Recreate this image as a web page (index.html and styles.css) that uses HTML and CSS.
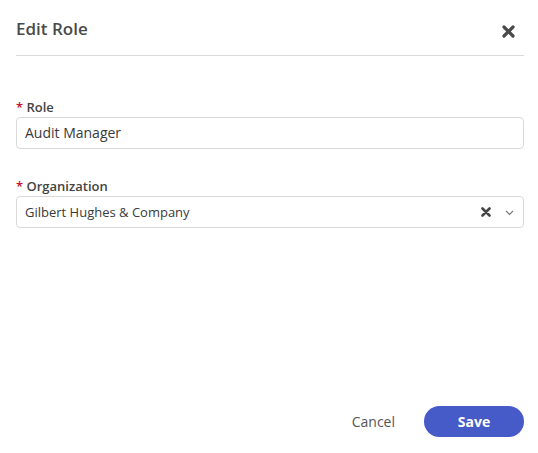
FILE: index.html
```html
<!DOCTYPE html>
<html>
<head>
<meta charset="utf-8">
<link rel="stylesheet" href="styles.css">
</head>
<body>
<div class="dialog">
  <div class="header">
    <h1 class="title">Edit Role</h1>
    <button class="close" aria-label="Close">
      <svg width="13" height="13" viewBox="0 0 13 13"><path d="M2 2 L11 11 M11 2 L2 11" stroke="#4a4a4a" stroke-width="3.2" stroke-linecap="round"/></svg>
    </button>
  </div>
  <div class="form">
    <div class="field">
      <label class="label"><span class="req">*</span> Role</label>
      <div class="input">Audit Manager</div>
    </div>
    <div class="field field-org">
      <label class="label"><span class="req">*</span> Organization</label>
      <div class="input select">
        <span class="value">Gilbert Hughes &amp; Company</span>
        <span class="clear">
          <svg width="10" height="10" viewBox="0 0 10 10"><path d="M1.5 1.5 L8.5 8.5 M8.5 1.5 L1.5 8.5" stroke="#454545" stroke-width="2.6" stroke-linecap="round"/></svg>
        </span>
        <span class="chev">
          <svg width="9" height="6" viewBox="0 0 9 6"><path d="M1 1 L4.5 4.5 L8 1" fill="none" stroke="#777" stroke-width="1.1"/></svg>
        </span>
      </div>
    </div>
  </div>
  <div class="footer">
    <button class="cancel">Cancel</button>
    <button class="save">Save</button>
  </div>
</div>
</body>
</html>
```

FILE: styles.css
```css
* { box-sizing: border-box; }
html, body { margin: 0; padding: 0; background: #fff; }
body { font-family: "Open Sans", "Liberation Sans", sans-serif; color: #333; }

.dialog {
  display: flex;
  flex-direction: column;
  min-height: 453px;
  padding: 0 14px 16px 16px;
}

.header {
  display: flex;
  align-items: center;
  justify-content: space-between;
  padding-top: 18px;
  padding-bottom: 15px;
  border-bottom: 1px solid #d9d9d9;
}
.title {
  margin: 0;
  font-size: 17px;
  line-height: 22px;
  font-weight: 600;
  color: #4a4a4a;
}
.close {
  border: 0;
  background: none;
  padding: 0;
  margin-right: 9px;
  margin-top: 4px;
  width: 13px;
  height: 13px;
  display: flex;
  cursor: pointer;
}

.form { padding-top: 42px; }
.field-org { margin-top: 28px; }

.label {
  display: block;
  font-size: 13px;
  line-height: 18px;
  font-weight: 600;
  color: #444;
  padding-bottom: 1px;
}
.req { color: #c8102e; }

.input {
  height: 32px;
  border: 1px solid #d9d9d9;
  border-radius: 4px;
  padding: 0 8px;
  font-size: 14px;
  line-height: 30px;
  color: #3a3a3a;
  display: flex;
  align-items: center;
}
.select .value { flex: 1; font-size: 13px; }
.clear { display: flex; margin-right: 14px; }
.chev { display: flex; margin-right: 1px; margin-top: 1px; }

.footer {
  margin-top: auto;
  display: flex;
  justify-content: flex-end;
  align-items: center;
}
.cancel {
  border: 0;
  background: none;
  font-family: inherit;
  font-size: 14px;
  color: #555;
  padding: 0;
  margin-right: 29px;
  cursor: pointer;
}
.save {
  width: 100px;
  height: 31px;
  border: 0;
  border-radius: 16px;
  background: #465ac8;
  color: #fff;
  font-family: inherit;
  font-size: 14px;
  font-weight: 700;
  cursor: pointer;
}
```
